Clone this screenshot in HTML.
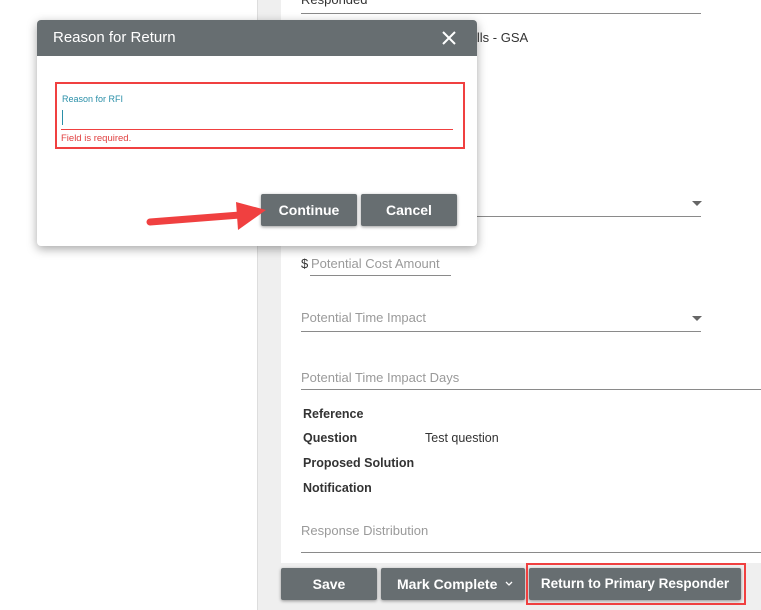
<!DOCTYPE html>
<html><head><style>
*{box-sizing:border-box;margin:0;padding:0}
body{width:761px;height:610px;overflow:hidden;background:#fff;font-family:"Liberation Sans",sans-serif;position:relative}
.a{position:absolute}
.ph{color:#9a9a9a;font-size:13px}
.ln{height:1px;background:#8a8a8a}
.lbl{font-size:12.5px;color:#333;font-weight:bold}
.btn{position:absolute;background:#676e71;color:#fff;font-weight:bold;font-size:14px;text-align:center;line-height:32px;border-radius:2px;box-shadow:0 1px 3px rgba(0,0,0,.4)}
.caret{width:0;height:0;border-left:5px solid transparent;border-right:5px solid transparent;border-top:5px solid #666}
</style></head><body>
<div class="a" style="left:257px;top:0;width:24px;height:610px;background:#efefef;border-left:1px solid #ddd"></div>
<div class="a" style="left:281px;top:563px;width:480px;height:47px;background:#efefef"></div>
<div class="a" style="left:301px;top:-8px;font-size:13px;color:#333">Responded</div>
<div class="a ln" style="left:301px;top:13px;width:400px"></div>
<div class="a" style="left:474px;top:30px;font-size:13px;color:#333">ills - GSA</div>
<div class="a caret" style="left:692px;top:201px"></div>
<div class="a ln" style="left:301px;top:216px;width:400px"></div>
<div class="a" style="left:301px;top:256px;font-size:13px;color:#333">$</div>
<div class="a ph" style="left:311px;top:256px">Potential Cost Amount</div>
<div class="a ln" style="left:310px;top:275px;width:141px"></div>
<div class="a ph" style="left:301px;top:310px">Potential Time Impact</div>
<div class="a caret" style="left:692px;top:316px"></div>
<div class="a ln" style="left:301px;top:331px;width:400px"></div>
<div class="a ph" style="left:301px;top:370px">Potential Time Impact Days</div>
<div class="a ln" style="left:301px;top:389px;width:460px"></div>
<div class="a lbl" style="left:303px;top:407px">Reference</div>
<div class="a lbl" style="left:303px;top:431px">Question</div>
<div class="a" style="left:425px;top:431px;font-size:12.5px;color:#333">Test question</div>
<div class="a lbl" style="left:303px;top:456px">Proposed Solution</div>
<div class="a lbl" style="left:303px;top:481px">Notification</div>
<div class="a ph" style="left:301px;top:523px">Response Distribution</div>
<div class="a ln" style="left:301px;top:552px;width:460px"></div>
<div class="btn" style="left:281px;top:568px;width:96px">Save</div>
<div class="btn" style="left:381px;top:568px;width:144px;text-align:left;padding-left:16px">Mark Complete</div>
<svg class="a" style="left:505px;top:581px" width="8" height="6"><path d="M1 1L4 4L7 1" stroke="#fff" stroke-width="1.3" fill="none"/></svg>
<div class="btn" style="left:529px;top:568px;width:212px;font-size:13.5px">Return to Primary Responder</div>
<div class="a" style="left:526px;top:563px;width:220px;height:42px;border:2px solid #f04040"></div>

<div class="a" style="left:37px;top:20px;width:440px;height:226px;background:#fff;border-radius:4px;box-shadow:0 3px 10px rgba(0,0,0,.35);overflow:hidden">
<div style="height:36px;background:#676e71;color:#fff;font-size:15px;line-height:36px;padding-left:16px">Reason for Return</div>
<svg class="a" style="left:404px;top:10px" width="16" height="16"><path d="M2 2L14 14M14 2L2 14" stroke="#fff" stroke-width="2"/></svg>
</div>
<div class="a" style="left:55px;top:82px;width:410px;height:67px;border:2px solid #f04040"></div>
<div class="a" style="left:62px;top:94px;font-size:9px;color:#2a8fa8">Reason for RFI</div>
<div class="a" style="left:62px;top:110px;width:1px;height:15px;background:#2a8fa8"></div>
<div class="a" style="left:61px;top:129px;width:392px;height:1px;background:#f04040"></div>
<div class="a" style="left:61px;top:133px;font-size:9.5px;color:#e04040">Field is required.</div>
<div class="btn" style="left:261px;top:194px;width:96px">Continue</div>
<div class="btn" style="left:361px;top:194px;width:96px">Cancel</div>
<svg class="a" style="left:140px;top:195px" width="130" height="40"><path d="M10 27L100 20" stroke="#f04040" stroke-width="7" stroke-linecap="round"/><path d="M96 7L126 15L98 35Z" fill="#f04040"/></svg>
</body></html>
